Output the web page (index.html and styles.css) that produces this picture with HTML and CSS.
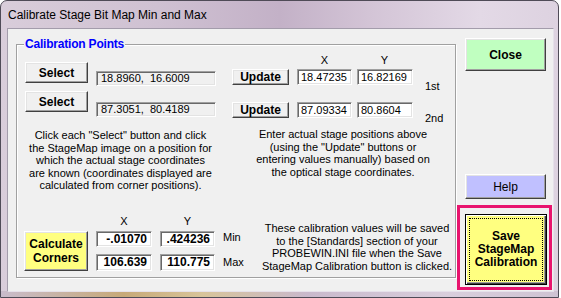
FILE: index.html
```html
<!DOCTYPE html>
<html lang="en">
<head>
	<meta charset="UTF-8">
	<title>Calibrate Stage Bit Map Min and Max</title>
	<link rel="stylesheet" href="styles.css">
</head>
<body>
	<div id="window">
		<div class="titlebar">Calibrate Stage Bit Map Min and Max</div>
		<div class="client">
			<div class="group">
				<span class="legend">Calibration Points</span>
				<div class="top">
					<!-- picked on the stage map -->
					<div class="picked">
						<div class="pick-row">
							<button class="btn btn-select">Select</button>
							<span class="field field-gray">18.8960,&nbsp; 16.6009</span>
						</div>
						<div class="pick-row pick-row-2">
							<button class="btn btn-select">Select</button>
							<span class="field field-gray">87.3051,&nbsp; 80.4189</span>
						</div>
						<p class="hint hint-left">Click each "Select" button and click<br>the StageMap image on a position for<br>which the actual stage coordinates<br>are known (coordinates displayed are<br>calculated from corner positions).</p>
					</div>
					<!-- actual stage positions -->
					<div class="actual">
						<div class="axis"><span>X</span><span>Y</span></div>
						<div class="act-row">
							<button class="btn btn-update">Update</button>
							<span class="field field-x">18.47235</span>
							<span class="field field-y">16.82169</span>
							<span class="tag tag-1">1st</span>
						</div>
						<div class="act-row act-row-2">
							<button class="btn btn-update">Update</button>
							<span class="field field-x">87.09334</span>
							<span class="field field-y">80.8604</span>
							<span class="tag tag-2">2nd</span>
						</div>
						<p class="hint hint-right">Enter actual stage positions above<br>(using the "Update" buttons or<br>entering values manually) based on<br>the optical stage coordinates.</p>
					</div>
				</div>
				<div class="bottom">
					<div class="corners">
						<span></span>
						<span class="axis-label">X</span>
						<span class="axis-label">Y</span>
						<span></span>
						<button class="btn btn-calc">Calculate<br>Corners</button>
						<span class="field field-num">-.01070</span>
						<span class="field field-num">.424236</span>
						<span class="tag">Min</span>
						<span class="field field-num field-max">106.639</span>
						<span class="field field-num field-max">110.775</span>
						<span class="tag tag-max">Max</span>
					</div>
					<p class="hint note">These calibration values will be saved<br>to the [Standards] section of your<br>PROBEWIN.INI file when the Save<br>StageMap Calibration button is clicked.</p>
				</div>
			</div>
			<div class="side">
				<button class="btn btn-close">Close</button>
				<button class="btn btn-help">Help</button>
				<div class="focus-ring">
					<button class="btn btn-save"><span>Save<br>StageMap<br>Calibration</span></button>
				</div>
			</div>
		</div>
	</div>
</body>
</html>
```

FILE: styles.css
```css
* {
	box-sizing: border-box;
}
html, body {
	margin: 0;
	padding: 0;
}
body {
	width: 561px;
	height: 298px;
	overflow: hidden;
	background: #fff;
	font-family: "Liberation Sans", Arial, sans-serif;
	font-size: 11px;
	color: #000;
}
p {
	margin: 0;
}

/* controls */
.btn {
	display: flex;
	align-items: center;
	justify-content: center;
	margin: 0;
	padding: 0;
	border: 1px solid;
	border-color: #fff #404040 #404040 #fff;
	background: #f0f0f0;
	box-shadow: inset -1px -1px 0 #a0a0a0, inset 1px 1px 0 #e3e3e3;
	color: #000;
	font-family: inherit;
	font-size: 12px;
	font-weight: bold;
	line-height: 1;
}
.field {
	display: block;
	border: 1px solid;
	border-color: #a0a0a0 #fff #fff #a0a0a0;
	background: #fff;
	box-shadow: inset 1px 1px 0 #696969, inset -1px -1px 0 #e3e3e3;
	padding-left: 4px;
	white-space: nowrap;
	overflow: hidden;
}
.field-gray {
	background: #f0f0f0;
}

#window {
	width: 559px;
	height: 298px;
	border: 1px solid #4f4b57;
	border-radius: 7px 7px 0 0;
	background:
		linear-gradient(90deg, #c9bccc 0%, #c7a978 22%, #d8c49a 36%, #c9b9cc 55%, #d9cedc 80%, #cfc3d3 100%) left bottom / 100% 6px no-repeat,
		linear-gradient(90deg, #d9cdda 0%, #cfc1d2 28%, #c3b1c7 50%, #d3c4d6 66%, #e3d9e6 86%, #ddd2e0 100%);
}
.titlebar {
	height: 27px;
	line-height: 28px;
	padding-left: 7px;
	font-size: 12px;
	color: #000;
}
.client {
	display: flex;
	align-items: flex-start;
	width: 547px;
	height: 264px;
	margin-left: 6px;
	border: 1px solid;
	border-color: #a39cab #e6e1ea #e6e1ea #a39cab;
	background: #f0f0f0;
}

/* group box */
.group {
	position: relative;
	width: 440px;
	height: 234px;
	margin: 15px 0 0 8px;
	border: 1px solid #a0a0a0;
	box-shadow: inset 1px 1px 0 #fff, 1px 1px 0 #fff;
}
.legend {
	position: absolute;
	top: -8px;
	left: 7px;
	padding: 0 1px;
	background: #f0f0f0;
	color: #0000ff;
	font-size: 12px;
	font-weight: bold;
	line-height: 14px;
	letter-spacing: -0.2px;
}
.top {
	display: flex;
	height: 170px;
}
.picked {
	width: 191px;
	margin-left: 8px;
}
.pick-row {
	display: flex;
	align-items: flex-start;
	margin-top: 17px;
}
.pick-row-2 {
	margin-top: 5px;
}
.btn-select {
	width: 63px;
	height: 21px;
}
.pick-row .field {
	width: 120px;
	height: 15px;
	margin: 9px 0 0 8px;
	line-height: 13px;
}
.pick-row-2 .field {
	margin-top: 11px;
}
.hint {
	line-height: 12.5px;
	text-align: center;
	white-space: nowrap;
}
.hint-left {
	margin-top: 12px;
}
.actual {
	width: 222px;
	margin-left: 16px;
}
.axis {
	display: flex;
	gap: 5px;
	margin-top: 9px;
	padding-left: 65px;
	line-height: 12px;
}
.axis span {
	width: 55px;
	text-align: center;
}
.act-row {
	display: flex;
	align-items: flex-start;
	margin-top: 3px;
}
.act-row-2 {
	margin-top: 17px;
}
.btn-update {
	width: 57px;
	height: 16px;
}
.act-row .field {
	height: 16px;
	line-height: 14px;
	padding-left: 3px;
}
.field-x {
	width: 55px;
	margin-left: 8px;
}
.field-y {
	width: 56px;
	margin-left: 5px;
}
.tag {
	line-height: 12px;
}
.tag-1 {
	margin: 11px 0 -7px 12px;
}
.tag-2 {
	margin: 10px 0 -6px 12px;
}
.hint-right {
	margin-top: 10px;
}
.bottom {
	display: flex;
	height: 62px;
}
.corners {
	display: grid;
	grid-template-columns: 64px 56px 55px auto;
	grid-template-rows: 16px 23px 17px;
	column-gap: 8px;
	margin-left: 7px;
}
.axis-label {
	line-height: 12px;
	text-align: center;
}
.btn-calc {
	grid-row: 2 / 4;
	height: 40px;
	background: #ffff80;
	line-height: 14px;
}
.field-num {
	height: 16px;
	padding-right: 4px;
	text-align: right;
	font-size: 12px;
	font-weight: bold;
	line-height: 14px;
}
.field-max {
	height: 17px;
	line-height: 15px;
}
.tag-max {
	margin-top: 2px;
}
.note {
	width: 196px;
	margin: 7px 0 0 auto;
	line-height: 12.7px;
}

/* right hand buttons */
.side {
	display: flex;
	flex-direction: column;
	width: 95px;
	margin-left: 1px;
}
.btn-close {
	width: 81px;
	height: 33px;
	margin: 9px 0 0 8px;
	background: #c0ffc0;
}
.btn-help {
	width: 81px;
	height: 25px;
	margin: 103px 0 0 8px;
	background: #c0c0ff;
	font-weight: normal;
}
.focus-ring {
	width: 95px;
	height: 85px;
	margin-top: 6px;
	padding: 6px 0 0 5px;
	border: 3px solid #e8146e;
}
.btn-save {
	width: 82px;
	height: 71px;
	padding: 3px;
	border: 1px solid #000;
	background: #ffff80;
	box-shadow: inset 1px 1px 0 #fff, inset -1px -1px 0 #404040, inset -2px -2px 0 #a0a0a0;
	line-height: 13px;
}
.btn-save span {
	display: flex;
	align-items: center;
	justify-content: center;
	width: 100%;
	height: 100%;
	border: 1px dotted #000;
}
```
